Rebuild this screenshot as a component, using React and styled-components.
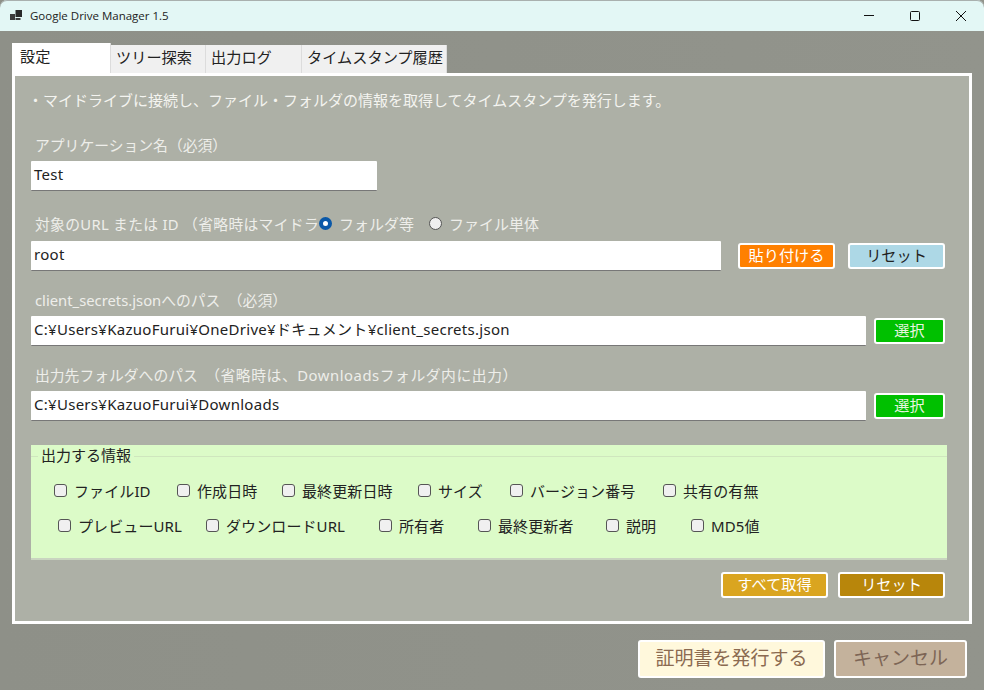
import React from 'react';
import styled, { createGlobalStyle } from 'styled-components';

const GlobalStyle = createGlobalStyle`
  html, body, #root {
    margin: 0;
    padding: 0;
    height: 100%;
  }
  body {
    font-family: "Noto Sans", "Noto Sans CJK JP", sans-serif;
    overflow: hidden;
    background: #90928a;
  }
`;

const row1 = [
  { label: 'ファイルID', width: 123 },
  { label: '作成日時', width: 105 },
  { label: '最終更新日時', width: 136 },
  { label: 'サイズ', width: 92 },
  { label: 'バージョン番号', width: 153 },
  { label: '共有の有無', width: 100 },
];

const row2 = [
  { label: 'プレビューURL', width: 148 },
  { label: 'ダウンロードURL', width: 173 },
  { label: '所有者', width: 99 },
  { label: '最終更新者', width: 128 },
  { label: '説明', width: 85 },
  { label: 'MD5値', width: 90 },
];

const App = () => (
  <>
    <GlobalStyle />
    <Window>
      <TitleBar>
        <AppIcon width="14" height="12" viewBox="0 0 14 12">
          <rect x="0" y="4" width="5" height="6" fill="#3c3c3c" />
          <rect x="5.5" y="0" width="6.5" height="7" fill="#2a2a2a" />
          <rect x="5.5" y="8" width="5" height="2" fill="#3c3c3c" />
        </AppIcon>
        <Title>Google Drive Manager 1.5</Title>
        <WindowButtons>
          <WindowButton>
            <svg width="12" height="12" viewBox="0 0 12 12">
              <path d="M1 5.5h10" stroke="#111" strokeWidth="1" />
            </svg>
          </WindowButton>
          <WindowButton>
            <svg width="12" height="12" viewBox="0 0 12 12">
              <rect x="1.5" y="1.5" width="9" height="9" rx="1" fill="none" stroke="#111" strokeWidth="1" />
            </svg>
          </WindowButton>
          <WindowButton>
            <svg width="12" height="12" viewBox="0 0 12 12">
              <path d="M1 1l10 10M11 1L1 11" stroke="#111" strokeWidth="1" />
            </svg>
          </WindowButton>
        </WindowButtons>
      </TitleBar>

      <Content>
        <Tabs>
          <Tab $active $width={99}>設定</Tab>
          <Tab $width={95}>ツリー探索</Tab>
          <Tab $width={96}>出力ログ</Tab>
          <Tab $width={145}>タイムスタンプ履歴</Tab>
        </Tabs>

        <Panel>
          <Intro>・マイドライブに接続し、ファイル・フォルダの情報を取得してタイムスタンプを発行します。</Intro>

          <Label>アプリケーション名（必須）</Label>
          <FieldRow>
            <Input $width={346}>Test</Input>
          </FieldRow>

          <RadioRow>
            <RadioLabel>対象のURL または ID （省略時はマイドラ</RadioLabel>
            <Radio $checked />
            <RadioText $width={90}>フォルダ等</RadioText>
            <Radio />
            <RadioText>ファイル単体</RadioText>
          </RadioRow>
          <FieldRow $top={6}>
            <Input $width={690}>root</Input>
            <ActionButton $bg="#ff8000" $color="#fff" $width={97} $left={17}>貼り付ける</ActionButton>
            <ActionButton $bg="#add8e6" $color="#222" $width={97} $left={13}>リセット</ActionButton>
          </FieldRow>

          <Label $top={17}>client_secrets.jsonへのパス　（必須）</Label>
          <FieldRow>
            <Input $width={835}>C:¥Users¥KazuoFurui¥OneDrive¥ドキュメント¥client_secrets.json</Input>
            <ActionButton $bg="#00c000" $color="#e8f5e0" $width={71} $left={8}>選択</ActionButton>
          </FieldRow>

          <Label $top={17}>
            出力先フォルダへのパス　<LabelNote>（省略時は、Downloadsフォルダ内に出力）</LabelNote>
          </Label>
          <FieldRow>
            <Input $width={835}>C:¥Users¥KazuoFurui¥Downloads</Input>
            <ActionButton $bg="#00c000" $color="#e8f5e0" $width={71} $left={8}>選択</ActionButton>
          </FieldRow>

          <GroupBox>
            <GroupTitle>出力する情報</GroupTitle>
            <CheckRow $left={23} $top={36}>
              {row1.map((item) => (
                <CheckItem key={item.label} $width={item.width}>
                  <CheckBox />
                  {item.label}
                </CheckItem>
              ))}
            </CheckRow>
            <CheckRow $left={27} $top={17}>
              {row2.map((item) => (
                <CheckItem key={item.label} $width={item.width}>
                  <CheckBox />
                  {item.label}
                </CheckItem>
              ))}
            </CheckRow>
          </GroupBox>

          <GroupActions>
            <ActionButton $bg="#daa520" $color="#fff" $width={107}>すべて取得</ActionButton>
            <ActionButton $bg="#b8860b" $color="#fff" $width={107}>リセット</ActionButton>
          </GroupActions>
        </Panel>

        <Footer>
          <FooterButton $bg="#fff8dc" $color="#8b6a50" $width={187}>証明書を発行する</FooterButton>
          <FooterButton $bg="#c4b29c" $color="#7d6555" $width={133}>キャンセル</FooterButton>
        </Footer>
      </Content>
    </Window>
  </>
);

const Window = styled.div`
  width: 984px;
  height: 690px;
  display: flex;
  flex-direction: column;
  background: linear-gradient(90deg, #8e9088 0%, #92948c 100%);
`;

const TitleBar = styled.div`
  height: 31px;
  flex: none;
  display: flex;
  align-items: center;
  padding-left: 10px;
  background: #e3f7f5;
  border-radius: 7px 7px 0 0;
  box-shadow: inset 0 1px 0 #a9b0ae;
`;

const AppIcon = styled.svg`
  flex: none;
  margin-right: 6px;
`;

const Title = styled.div`
  font-family: "Open Sans", sans-serif;
  font-size: 11.5px;
  color: #222;
`;

const WindowButtons = styled.div`
  margin-left: auto;
  display: flex;
`;

const WindowButton = styled.div`
  width: 46px;
  height: 31px;
  display: flex;
  align-items: center;
  justify-content: center;
`;

const Content = styled.div`
  flex: 1;
  padding: 12px 12px 0;
  display: flex;
  flex-direction: column;
`;

const Tabs = styled.div`
  display: flex;
  align-items: flex-end;
  height: 30px;
`;

const Tab = styled.div`
  width: ${(p) => p.$width}px;
  height: ${(p) => (p.$active ? 30 : 28)}px;
  box-sizing: border-box;
  padding: ${(p) => (p.$active ? '2px 0 0 8px' : '1px 0 0 5px')};
  background: ${(p) => (p.$active ? '#fff' : '#f0f0f0')};
  border-right: 1px solid #dcdcdc;
  font-size: 15.2px;
  line-height: 22px;
  color: #222;
  white-space: nowrap;
`;

const Panel = styled.div`
  width: 960px;
  height: 551px;
  box-sizing: border-box;
  border: 3px solid #fff;
  background: #adb0a6;
  padding: 12px 16px 0;
`;

const Intro = styled.div`
  margin-left: -3px;
  font-size: 15px;
  line-height: 24px;
  color: #f4f4f0;
  white-space: nowrap;
`;

const Label = styled.div`
  margin-top: ${(p) => p.$top ?? 21}px;
  padding-left: 4px;
  font-size: 14.8px;
  line-height: 24px;
  height: 24px;
  color: #eeeeea;
  white-space: pre;
`;

const LabelNote = styled.span`
  letter-spacing: 0.55px;
`;

const FieldRow = styled.div`
  display: flex;
  align-items: center;
  height: 30px;
  margin-top: ${(p) => p.$top ?? 4}px;
`;

const Input = styled.div`
  width: ${(p) => p.$width}px;
  height: 30px;
  flex: none;
  box-sizing: border-box;
  padding-left: 3px;
  background: #fff;
  border-bottom: 1px solid #777;
  border-radius: 1px;
  font-size: 15px;
  letter-spacing: 0.28px;
  line-height: 27px;
  color: #222;
  white-space: nowrap;
`;

const ActionButton = styled.div`
  width: ${(p) => p.$width}px;
  height: 26px;
  flex: none;
  margin-left: ${(p) => p.$left ?? 0}px;
  box-sizing: border-box;
  border: 2px solid #fff;
  border-radius: 3px;
  background: ${(p) => p.$bg};
  color: ${(p) => p.$color};
  font-size: 15.2px;
  line-height: 21px;
  text-align: center;
`;

const RadioRow = styled.div`
  margin-top: 20px;
  height: 24px;
  display: flex;
  align-items: center;
  font-size: 14.8px;
  color: #eeeeea;
`;

const RadioLabel = styled.div`
  width: 284px;
  margin-left: 4px;
  letter-spacing: 0.3px;
  white-space: nowrap;
  flex: none;
`;

const Radio = styled.span`
  width: 13px;
  height: 13px;
  flex: none;
  box-sizing: border-box;
  border-radius: 50%;
  background: ${(p) => (p.$checked ? '#fff' : '#efefef')};
  border: ${(p) => (p.$checked ? '4px solid #0a58a8' : '1px solid #555')};
`;

const RadioText = styled.span`
  margin-left: 7px;
  font-size: 15px;
  width: ${(p) => (p.$width ? `${p.$width}px` : 'auto')};
`;

const GroupBox = styled.div`
  position: relative;
  margin-top: 24px;
  width: 916px;
  height: 115px;
  box-sizing: border-box;
  background: #dcfbc8;
  border-bottom: 2px solid #c9d4c0;
  overflow: hidden;
  &::before {
    content: '';
    position: absolute;
    left: 0;
    right: 0;
    top: 11px;
    height: 1px;
    background: #cfe6be;
  }
`;

const GroupTitle = styled.div`
  position: absolute;
  left: 7px;
  top: 0;
  padding: 0 3px;
  background: #dcfbc8;
  font-size: 15px;
  line-height: 21px;
  color: #222;
`;

const CheckRow = styled.div`
  display: flex;
  padding-left: ${(p) => p.$left}px;
  padding-top: ${(p) => p.$top}px;
`;

const CheckItem = styled.label`
  width: ${(p) => p.$width}px;
  flex: none;
  display: flex;
  align-items: center;
  height: 18px;
  font-size: 15px;
  letter-spacing: 0.1px;
  color: #222;
  white-space: nowrap;
`;

const CheckBox = styled.span`
  width: 13px;
  height: 13px;
  flex: none;
  box-sizing: border-box;
  margin-right: 7px;
  border: 1px solid #555;
  border-radius: 3px;
  background: #f0f0f0;
`;

const GroupActions = styled.div`
  display: flex;
  justify-content: flex-end;
  gap: 10px;
  margin-top: 12px;
  width: 914px;
`;

const Footer = styled.div`
  display: flex;
  justify-content: flex-end;
  gap: 9px;
  margin-top: 16px;
  padding-right: 5px;
`;

const FooterButton = styled.div`
  width: ${(p) => p.$width}px;
  height: 38px;
  box-sizing: border-box;
  border: 2px solid #fff;
  border-radius: 3px;
  background: ${(p) => p.$bg};
  color: ${(p) => p.$color};
  font-size: 19px;
  line-height: 33px;
  text-align: center;
`;

export default App;
